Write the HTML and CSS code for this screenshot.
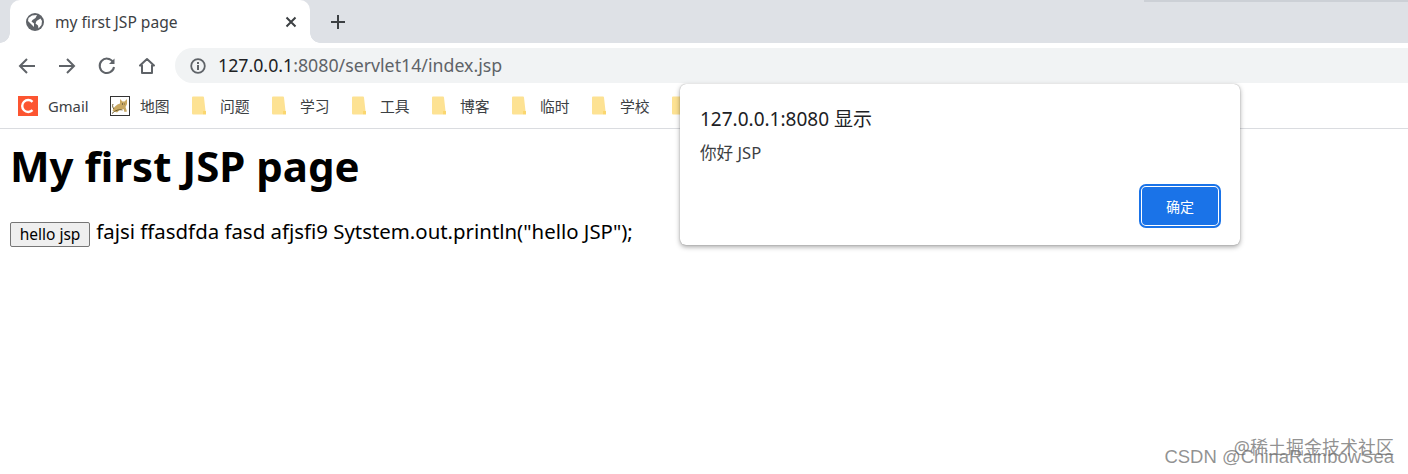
FILE: index.html
```html
<!DOCTYPE html>
<html lang="zh">
<head>
<meta charset="utf-8">
<title>my first JSP page</title>
<link rel="stylesheet" href="styles.css">
</head>
<body>
<div class="chrome">
  <div class="tabstrip">
    <div class="tab">
      <svg class="globe" width="18" height="18" viewBox="0 0 18 18"><circle cx="9" cy="9" r="9" fill="#5f6368"/><path d="M2.500 5 6 2.500 11 2 9.500 5 6.500 7 5.500 8.500 8 10.500 8 14 6 12 2 8zM10.500 8l4-2.500 1.500 2.500-.5 4-3 3.500-.5-3-2.500-2z" fill="#fff"/></svg>
      <span class="tab-title">my first JSP page</span>
      <svg class="tab-close" width="12" height="12" viewBox="0 0 12 12"><path d="M1.500 1.500l9 9M10.500 1.500l-9 9" stroke="#3c4043" stroke-width="2"/></svg>
    </div>
    <svg class="new-tab" width="16" height="16" viewBox="0 0 16 16"><path d="M8 1v14M1 8h14" stroke="#3c4043" stroke-width="2"/></svg>
  </div>
  <div class="toolbar">
    <div class="navs">
      <svg width="20" height="20" viewBox="0 0 20 20" fill="none" stroke="#5f6368" stroke-width="2"><path d="M18 10H3M10 3l-7 7 7 7"/></svg>
      <svg width="20" height="20" viewBox="0 0 20 20" fill="none" stroke="#5f6368" stroke-width="2"><path d="M2 10h15M10 3l7 7-7 7"/></svg>
      <svg width="20" height="20" viewBox="0 0 20 20" fill="none" stroke="#5f6368" stroke-width="2"><path d="M16 6a7.200 7.200 0 1 0 1 5"/><path d="M17.500 2.500v5.500h-5.500z" fill="#5f6368" stroke="none"/></svg>
      <svg width="20" height="20" viewBox="0 0 20 20" fill="none" stroke="#5f6368" stroke-width="2"><path d="M10 3 3 9.500h2V17h10V9.500h2z" stroke-linejoin="round"/></svg>
    </div>
    <div class="omnibox">
      <svg class="info" width="16" height="16" viewBox="0 0 16 16"><circle cx="8" cy="8" r="6.800" fill="none" stroke="#5f6368" stroke-width="1.800"/><path d="M7 7h2v5H7zM7 4h2v2H7z" fill="#5f6368"/></svg>
      <span class="url"><b class="host">127.0.0.1</b>:8080/servlet14/index.jsp</span>
    </div>
  </div>
  <div class="bookmarks">
    <div class="bm bm-first">
      <svg width="20" height="20" viewBox="0 0 20 20"><rect width="20" height="20" fill="#fc5531"/><path d="M14.500 5.800A6 6 0 1 0 14.500 14.200" fill="none" stroke="#fff" stroke-width="2.400"/></svg>
      <span>Gmail</span>
    </div>
    <div class="bm bm-map">
      <svg width="20" height="20" viewBox="0 0 20 20"><rect x=".5" y=".5" width="19" height="19" fill="#fff" stroke="#333"/><path d="M2.500 15c1-4 4-6.500 7.500-7.500L10 3l2.500 2.500h2L17 3l0 5-1.500 3 1.500 4.500-2.500.5-1-3-4 1-2.500 2.500-2-1z" fill="#c9a862"/><path d="M2 17.500c3-3 7-4.500 10.500-3.500M3 8c-1 2 0 4 1 5" fill="none" stroke="#6b5a2a"/><path d="M12 8h1M14.500 8h.5" stroke="#333"/></svg>
      <span>地图</span>
    </div>
    <div class="bm"><svg class="folder" width="16" height="20" viewBox="0 0 16 20"><path d="M1 1.500a1 1 0 0 1 1-1h10a1 1 0 0 1 1 1L14.500 15H12v3.500H2a1 1 0 0 1-1-1z" fill="#fde293"/><path d="M12 15h3v3.500h-3z" fill="#fbd76f"/></svg><span>问题</span></div>
    <div class="bm"><svg class="folder" width="16" height="20" viewBox="0 0 16 20"><path d="M1 1.500a1 1 0 0 1 1-1h10a1 1 0 0 1 1 1L14.500 15H12v3.500H2a1 1 0 0 1-1-1z" fill="#fde293"/><path d="M12 15h3v3.500h-3z" fill="#fbd76f"/></svg><span>学习</span></div>
    <div class="bm"><svg class="folder" width="16" height="20" viewBox="0 0 16 20"><path d="M1 1.500a1 1 0 0 1 1-1h10a1 1 0 0 1 1 1L14.500 15H12v3.500H2a1 1 0 0 1-1-1z" fill="#fde293"/><path d="M12 15h3v3.500h-3z" fill="#fbd76f"/></svg><span>工具</span></div>
    <div class="bm"><svg class="folder" width="16" height="20" viewBox="0 0 16 20"><path d="M1 1.500a1 1 0 0 1 1-1h10a1 1 0 0 1 1 1L14.500 15H12v3.500H2a1 1 0 0 1-1-1z" fill="#fde293"/><path d="M12 15h3v3.500h-3z" fill="#fbd76f"/></svg><span>博客</span></div>
    <div class="bm"><svg class="folder" width="16" height="20" viewBox="0 0 16 20"><path d="M1 1.500a1 1 0 0 1 1-1h10a1 1 0 0 1 1 1L14.500 15H12v3.500H2a1 1 0 0 1-1-1z" fill="#fde293"/><path d="M12 15h3v3.500h-3z" fill="#fbd76f"/></svg><span>临时</span></div>
    <div class="bm"><svg class="folder" width="16" height="20" viewBox="0 0 16 20"><path d="M1 1.500a1 1 0 0 1 1-1h10a1 1 0 0 1 1 1L14.500 15H12v3.500H2a1 1 0 0 1-1-1z" fill="#fde293"/><path d="M12 15h3v3.500h-3z" fill="#fbd76f"/></svg><span>学校</span></div>
    <div class="bm"><svg class="folder" width="16" height="20" viewBox="0 0 16 20"><path d="M1 1.500a1 1 0 0 1 1-1h10a1 1 0 0 1 1 1L14.500 15H12v3.500H2a1 1 0 0 1-1-1z" fill="#fde293"/><path d="M12 15h3v3.500h-3z" fill="#fbd76f"/></svg></div>
  </div>
</div>
<main class="page">
  <h1>My first JSP page</h1>
  <p class="line"><button class="native-btn">hello jsp</button> fajsi ffasdfda fasd afjsfi9 Sytstem.out.println("hello JSP");</p>
</main>
<div class="dialog">
  <div class="dialog-title">127.0.0.1:8080 显示</div>
  <div class="dialog-msg">你好 JSP</div>
  <div class="dialog-actions"><button class="ok">确定</button></div>
</div>
<div class="mark mark-top">@稀土掘金技术社区</div>
<div class="mark mark-bottom">CSDN @ChinaRainbowSea</div>
</body>
</html>
```
FILE: styles.css
```css
html, body {
  margin: 0;
  padding: 0;
  background: #fff;
  overflow: hidden;
  height: 474px;
}
body {
  font-family: "Noto Sans", "Noto Sans CJK SC", sans-serif;
  color: #000;
}
.chrome {
  height: 129px;
  box-sizing: border-box;
  border-bottom: 1px solid #dadce0;
}
.tabstrip {
  position: relative;
  height: 43px;
  background: #dee1e6;
  display: flex;
  align-items: flex-end;
}
.tabstrip::after {
  content: "";
  position: absolute;
  left: 1144px;
  right: 0;
  top: 0;
  height: 2px;
  background: #ccd0d6;
}
.tab {
  position: relative;
  margin-left: 10px;
  width: 300px;
  height: 43px;
  box-sizing: border-box;
  background: #fff;
  border-radius: 10px 10px 0 0;
  display: flex;
  align-items: center;
  padding: 0 13px 0 16px;
}
.tab::before,
.tab::after {
  content: "";
  position: absolute;
  bottom: 0;
  width: 10px;
  height: 10px;
  background: radial-gradient(circle at 0 0, transparent 9.500px, #fff 10px);
}
.tab::before {
  left: -10px;
}
.tab::after {
  right: -10px;
  background: radial-gradient(circle at 100% 0, transparent 9.500px, #fff 10px);
}
.tab-title {
  margin-left: 11px;
  font-size: 15.600px;
  color: #3c4043;
  flex: 1;
  white-space: nowrap;
}
.new-tab {
  margin: 0 0 13px 20px;
}
.toolbar {
  height: 40px;
  padding-top: 5px;
  box-sizing: border-box;
  display: flex;
  align-items: stretch;
}
.navs {
  width: 175px;
  box-sizing: border-box;
  padding-left: 17px;
  display: flex;
  align-items: center;
  gap: 20px;
}
.omnibox {
  flex: 1;
  background: #f1f3f4;
  border-radius: 18px 0 0 18px;
  display: flex;
  align-items: center;
  padding-left: 15px;
}
.url {
  margin-left: 12px;
  margin-top: -2px;
  font-size: 17.750px;
  color: #5f6368;
  white-space: nowrap;
}
.host {
  font-weight: 400;
  color: #202124;
}
.bookmarks {
  height: 45px;
  padding-left: 18px;
  display: flex;
  align-items: center;
  font-size: 14.800px;
  color: #3c4043;
}
.bm {
  display: flex;
  align-items: center;
  width: 80px;
  flex: none;
  gap: 13px;
}
.bm-first {
  width: 92px;
  gap: 10px;
}
.bm-map {
  width: 81px;
  gap: 10px;
}
.page {
  padding: 0 10px;
}
h1 {
  margin: 9px 0 0;
  font-size: 42px;
  line-height: 56px;
  font-weight: 700;
}
.line {
  margin: 24px 0 0;
  font-size: 20.400px;
  line-height: 26px;
  white-space: nowrap;
}
.native-btn {
  height: 25px;
  width: 80px;
  margin-right: 1px;
  padding: 0;
  font: 15.500px "Noto Sans", sans-serif;
  color: #000;
  background: #efefef;
  border: 1px solid #767676;
  border-radius: 2px;
  vertical-align: -1px;
}
.dialog {
  position: absolute;
  left: 680px;
  top: 84px;
  width: 560px;
  height: 161px;
  box-sizing: border-box;
  background: #fff;
  border-radius: 6px;
  box-shadow: 0 0 1px rgba(0,0,0,.4), 0 2px 5px rgba(0,0,0,.35);
  padding: 22px 20px 0;
}
.dialog-title {
  font-size: 19px;
  line-height: 26px;
  color: #202124;
}
.dialog-msg {
  margin-top: 11px;
  font-size: 16.600px;
  line-height: 20px;
  color: #3c4043;
}
.dialog-actions {
  display: flex;
  justify-content: flex-end;
  margin-top: 22px;
}
.ok {
  width: 80px;
  height: 42px;
  box-sizing: border-box;
  background: #1a73e8;
  color: #fff;
  border: 2px solid #fff;
  outline: 2px solid #1a73e8;
  outline-offset: -1px;
  border-radius: 6px;
  font: 14px "Noto Sans CJK SC", sans-serif;
}
.mark {
  position: absolute;
  white-space: nowrap;
  color: rgba(110,110,110,.75);
}
.mark-top {
  right: 14px;
  top: 437px;
  font-size: 18px;
  line-height: 20px;
}
.mark-bottom {
  right: 14px;
  top: 446px;
  font-family: "Liberation Sans", sans-serif;
  font-size: 18.500px;
  line-height: 22px;
}
```
